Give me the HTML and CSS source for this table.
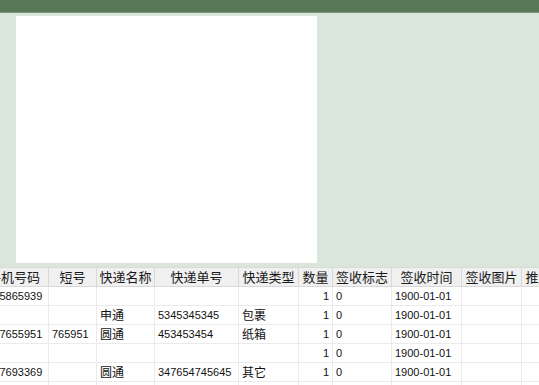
FILE: index.html
```html
<!DOCTYPE html>
<html lang="zh">
<head>
<meta charset="utf-8">
<title>快递</title>
<link rel="stylesheet" href="styles.css">
</head>
<body>
<div class="topbar"></div>
<div class="content">
  <div class="panel"></div>
</div>
<div class="grid-wrap">
  <table class="grid">
    <colgroup>
      <col class="c1"><col class="c2"><col class="c3"><col class="c4"><col class="c5">
      <col class="c6"><col class="c7"><col class="c8"><col class="c9"><col class="c10">
    </colgroup>
    <thead>
      <tr>
        <th class="first">手机号码</th><th>短号</th><th>快递名称</th><th>快递单号</th><th>快递类型</th>
        <th>数量</th><th>签收标志</th><th>签收时间</th><th>签收图片</th><th>推送状态</th>
      </tr>
    </thead>
    <tbody>
      <tr><td class="num">13805865939</td><td></td><td></td><td></td><td></td><td class="num r">1</td><td class="num">0</td><td class="num">1900-01-01</td><td></td><td></td></tr>
      <tr><td></td><td></td><td>申通</td><td class="num">5345345345</td><td>包裹</td><td class="num r">1</td><td class="num">0</td><td class="num">1900-01-01</td><td></td><td></td></tr>
      <tr><td class="num">13807655951</td><td class="num">765951</td><td>圆通</td><td class="num">453453454</td><td>纸箱</td><td class="num r">1</td><td class="num">0</td><td class="num">1900-01-01</td><td></td><td></td></tr>
      <tr><td></td><td></td><td></td><td></td><td></td><td class="num r">1</td><td class="num">0</td><td class="num">1900-01-01</td><td></td><td></td></tr>
      <tr><td class="num">13807693369</td><td></td><td>圆通</td><td class="num">347654745645</td><td>其它</td><td class="num r">1</td><td class="num">0</td><td class="num">1900-01-01</td><td></td><td></td></tr>
      <tr><td></td><td></td><td></td><td></td><td></td><td></td><td></td><td></td><td></td><td></td></tr>
    </tbody>
  </table>
</div>
</body>
</html>
```
FILE: styles.css
```css
html, body {
  margin: 0;
  padding: 0;
}
body {
  width: 539px;
  height: 385px;
  overflow: hidden;
  background: #dae5dc;
  font-family: "Noto Sans CJK SC", "Liberation Sans", sans-serif;
  color: #111;
}
.topbar {
  height: 12px;
  background: #587858;
  border-bottom: 1px solid #7a957c;
}
.content {
  padding: 3px 0 0 16px;
  height: 251px;
  box-sizing: border-box;
}
.panel {
  width: 301px;
  height: 247px;
  background: #ffffff;
}
.grid-wrap {
  margin-top: 3px;
  overflow: hidden;
  background: #ffffff;
  height: 121px;
}
.grid {
  table-layout: fixed;
  border-collapse: collapse;
  width: 610px;
  margin-left: -29px;
}
.c1 { width: 77px; }
.c2 { width: 48px; }
.c3 { width: 58px; }
.c4 { width: 84px; }
.c5 { width: 60px; }
.c6 { width: 34px; }
.c7 { width: 59px; }
.c8 { width: 70px; }
.c9 { width: 60px; }
.c10 { width: 60px; }
.grid th {
  height: 18px;
  padding: 0;
  font-weight: normal;
  font-size: 13px;
  line-height: 18px;
  color: #1a1a1a;
  background: #f0f0f0;
  border-top: 1px solid #d6dcd6;
  border-bottom: 1px solid #d8d8d8;
  border-left: 1px solid #d8d8d8;
  border-right: 1px solid #d8d8d8;
  text-align: center;
  white-space: nowrap;
  overflow: hidden;
}
.grid th.first {
  padding-left: 8px;
}
.grid td {
  height: 18px;
  padding: 0 3px;
  font-size: 12px;
  line-height: 18px;
  border: 1px solid #ebebeb;
  white-space: nowrap;
  overflow: hidden;
  vertical-align: middle;
}
.grid td.num {
  font-family: "Liberation Sans", sans-serif;
  font-size: 11px;
}
.grid td.r {
  text-align: right;
}
```
